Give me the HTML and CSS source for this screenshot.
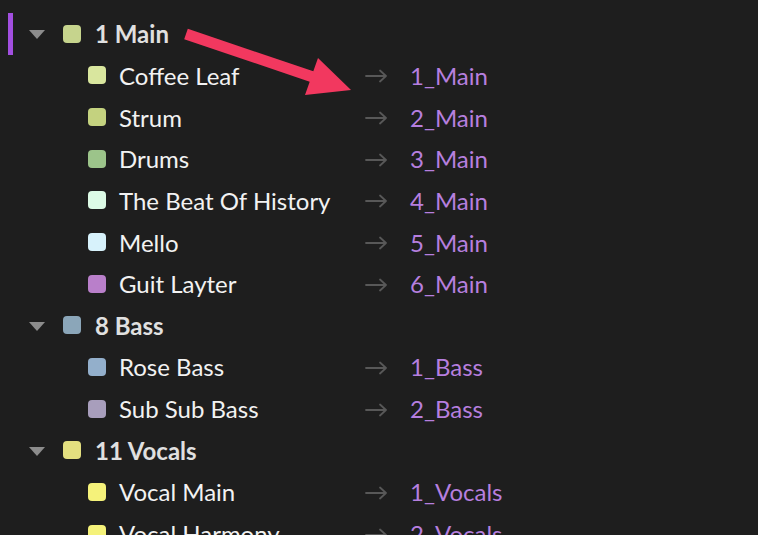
FILE: index.html
```html
<!DOCTYPE html>
<html lang="en">
<head>
    <meta charset="UTF-8">
    <title>Track Routing</title>
    <link rel="stylesheet" href="styles.css">
</head>
<body>
    <div class="tree">
        <!-- Main group -->
        <div class="row group active">
            <span class="caret"></span>
            <span class="swatch" style="background:#c6d48d"></span>
            <span class="name">1 Main</span>
        </div>
        <div class="row child">
            <span class="swatch" style="background:#d9e69e"></span>
            <span class="name">Coffee Leaf</span>
            <svg class="route" width="23" height="14" viewBox="0 0 23 14"><path d="M1 7H21M15 1.5L21 7L15 12.5"/></svg>
            <span class="target">1_Main</span>
        </div>
        <div class="row child">
            <span class="swatch" style="background:#c4d27f"></span>
            <span class="name">Strum</span>
            <svg class="route" width="23" height="14" viewBox="0 0 23 14"><path d="M1 7H21M15 1.5L21 7L15 12.5"/></svg>
            <span class="target">2_Main</span>
        </div>
        <div class="row child">
            <span class="swatch" style="background:#9cc48a"></span>
            <span class="name">Drums</span>
            <svg class="route" width="23" height="14" viewBox="0 0 23 14"><path d="M1 7H21M15 1.5L21 7L15 12.5"/></svg>
            <span class="target">3_Main</span>
        </div>
        <div class="row child">
            <span class="swatch" style="background:#dcfbe6"></span>
            <span class="name">The Beat Of History</span>
            <svg class="route" width="23" height="14" viewBox="0 0 23 14"><path d="M1 7H21M15 1.5L21 7L15 12.5"/></svg>
            <span class="target">4_Main</span>
        </div>
        <div class="row child">
            <span class="swatch" style="background:#d7f2fb"></span>
            <span class="name">Mello</span>
            <svg class="route" width="23" height="14" viewBox="0 0 23 14"><path d="M1 7H21M15 1.5L21 7L15 12.5"/></svg>
            <span class="target">5_Main</span>
        </div>
        <div class="row child">
            <span class="swatch" style="background:#b97fca"></span>
            <span class="name">Guit Layter</span>
            <svg class="route" width="23" height="14" viewBox="0 0 23 14"><path d="M1 7H21M15 1.5L21 7L15 12.5"/></svg>
            <span class="target">6_Main</span>
        </div>

        <!-- Bass group -->
        <div class="row group">
            <span class="caret"></span>
            <span class="swatch" style="background:#8ba6b9"></span>
            <span class="name">8 Bass</span>
        </div>
        <div class="row child">
            <span class="swatch" style="background:#93afcb"></span>
            <span class="name">Rose Bass</span>
            <svg class="route" width="23" height="14" viewBox="0 0 23 14"><path d="M1 7H21M15 1.5L21 7L15 12.5"/></svg>
            <span class="target">1_Bass</span>
        </div>
        <div class="row child">
            <span class="swatch" style="background:#a89ebc"></span>
            <span class="name">Sub Sub Bass</span>
            <svg class="route" width="23" height="14" viewBox="0 0 23 14"><path d="M1 7H21M15 1.5L21 7L15 12.5"/></svg>
            <span class="target">2_Bass</span>
        </div>

        <!-- Vocals group -->
        <div class="row group">
            <span class="caret"></span>
            <span class="swatch" style="background:#e3df7f"></span>
            <span class="name">11 Vocals</span>
        </div>
        <div class="row child">
            <span class="swatch" style="background:#f5f27a"></span>
            <span class="name">Vocal Main</span>
            <svg class="route" width="23" height="14" viewBox="0 0 23 14"><path d="M1 7H21M15 1.5L21 7L15 12.5"/></svg>
            <span class="target">1_Vocals</span>
        </div>
        <div class="row child">
            <span class="swatch" style="background:#f5f27a"></span>
            <span class="name">Vocal Harmony</span>
            <svg class="route" width="23" height="14" viewBox="0 0 23 14"><path d="M1 7H21M15 1.5L21 7L15 12.5"/></svg>
            <span class="target">2_Vocals</span>
        </div>
    </div>

    <!-- Annotation arrow -->
    <svg class="callout" width="758" height="535" viewBox="0 0 758 535">
        <polygon points="187.8,28.8 313.3,71.3 318,58 351,90 305,95 309.7,81.7 184.2,39.2"/>
    </svg>
</body>
</html>
```
FILE: styles.css
```css
/* General */
body {
    margin: 0;
    height: 535px;
    overflow: hidden;
    background: #1e1e1e;
    font-family: "Lato", "Noto Sans", sans-serif;
    font-size: 24px;
    color: #f2f2f2;
    position: relative;
}

.tree {
    padding-top: 13px;
    display: flex;
    flex-direction: column;
}

/* Rows */
.row {
    display: flex;
    align-items: center;
    height: 41.65px;
    flex-shrink: 0;
    box-sizing: border-box;
}

.swatch {
    width: 18px;
    height: 18px;
    border-radius: 4px;
    flex-shrink: 0;
}

/* Group rows */
.group {
    border-left: 5px solid transparent;
    margin-left: 8px;
    padding-left: 16px;
}
.group.active {
    border-left-color: #a24fe0;
}
.group .name {
    font-weight: 700;
    color: #e0e0e0;
    margin-left: 14px;
}
.caret {
    width: 0;
    height: 0;
    border-left: 8.5px solid transparent;
    border-right: 8.5px solid transparent;
    border-top: 9px solid #8c8c8c;
    margin-right: 18px;
    margin-top: 2px;
}

/* Child rows */
.child {
    padding-left: 88px;
}
.child .name {
    margin-left: 13px;
    width: 225px;
    white-space: nowrap;
}
.route {
    fill: none;
    stroke: #585858;
    stroke-width: 1.8;
    stroke-linecap: round;
    stroke-linejoin: round;
    margin-left: 21px;
    margin-top: 2px;
}
.target {
    margin-left: 22px;
    color: #b67fdf;
}

/* Annotation */
.callout {
    position: absolute;
    left: 0;
    top: 0;
    fill: #f2385f;
}
```
